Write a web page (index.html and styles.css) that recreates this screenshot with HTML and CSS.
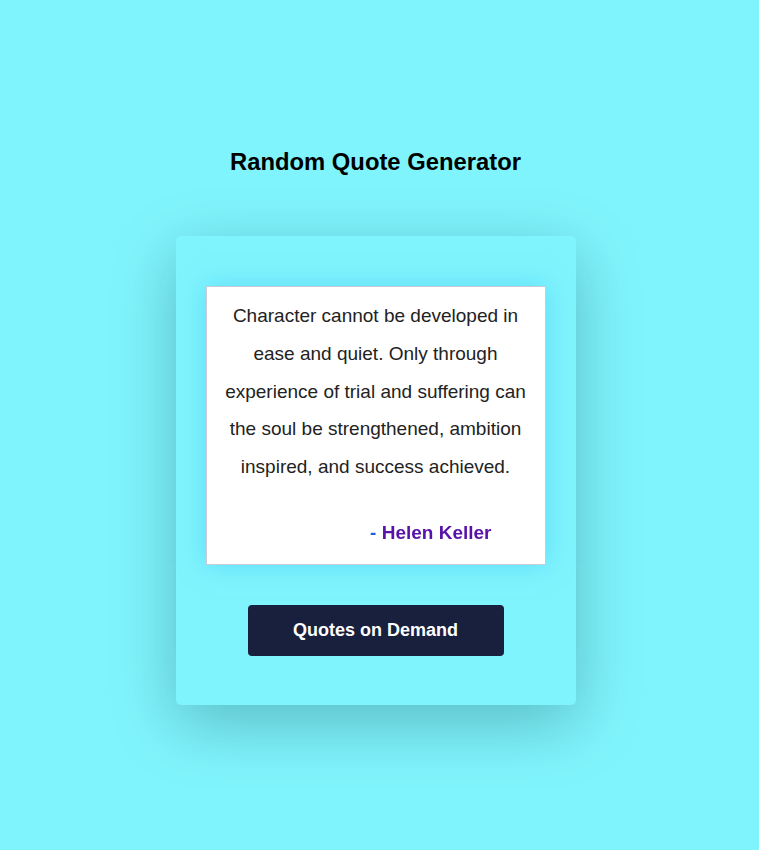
FILE: index.html
```html
<!DOCTYPE html>
<html lang="en">
<head>
<meta charset="utf-8">
<title>Random Quote Generator</title>
<link rel="stylesheet" href="styles.css">
</head>
<body>
  <main class="page">
    <h1 class="title">Random Quote Generator</h1>
    <section class="card">
      <div class="quote-box">
        <p class="quote-text">Character cannot be developed in ease and quiet. Only through experience of trial and suffering can the soul be strengthened, ambition inspired, and success achieved.</p>
        <p class="quote-author"><span class="author-name">- Helen Keller</span></p>
      </div>
      <button class="btn" type="button">Quotes on Demand</button>
    </section>
  </main>
</body>
</html>
```
FILE: styles.css
```css
html, body {
  margin: 0;
  padding: 0;
}
body {
  background: #80f4fc;
  font-family: "Liberation Sans", Arial, sans-serif;
  color: #000;
  min-height: 850px;
}
.page {
  display: flex;
  flex-direction: column;
  align-items: center;
  padding-top: 148px;
  padding-right: 8px;
}
.title {
  margin: 0;
  font-size: 23.8px;
  font-weight: bold;
  line-height: 28px;
}
.card {
  margin-top: 60px;
  width: 400px;
  box-sizing: border-box;
  padding: 50px 30px 49px;
  background: #80f4fc;
  border-radius: 5px;
  box-shadow: 0 18px 64px rgba(0, 60, 70, 0.3);
  display: flex;
  flex-direction: column;
  align-items: center;
}
.quote-box {
  width: 100%;
  box-sizing: border-box;
  background: #fff;
  border: 1px solid #c9c9d8;
  padding: 10px 14px 19px;
  box-shadow: 0 0 24px rgba(60, 200, 255, 0.55);
}
.quote-text {
  margin: 0;
  text-align: center;
  font-size: 19px;
  line-height: 37.75px;
  color: #222;
}
.quote-author {
  margin: 35px 0 0;
  text-align: right;
  padding-right: 39px;
  font-size: 19px;
  font-weight: bold;
  line-height: 24px;
}
.author-name {
  background: linear-gradient(to right, #1560e0 0%, #1560e0 6%, #5812a8 12%, #5812a8 100%);
  -webkit-background-clip: text;
  background-clip: text;
  color: transparent;
}
.btn {
  margin-top: 40px;
  width: 256px;
  height: 51px;
  border: none;
  border-radius: 4px;
  background: #18203e;
  color: #fff;
  font-family: "Liberation Sans", Arial, sans-serif;
  font-size: 18px;
  font-weight: bold;
  cursor: pointer;
}
```
